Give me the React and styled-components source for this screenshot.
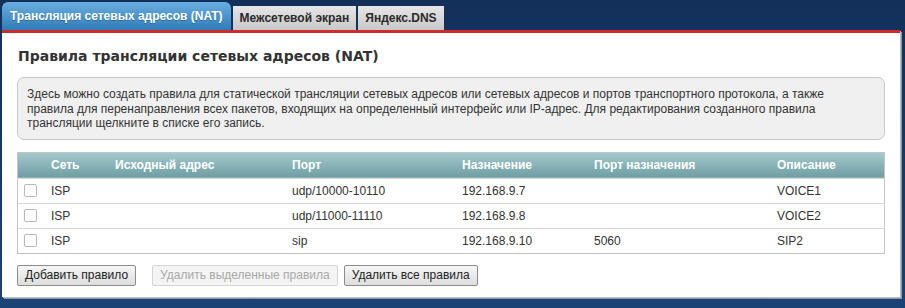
import React from 'react';
import styled, { createGlobalStyle } from 'styled-components';

const GlobalStyle = createGlobalStyle`
  html, body { margin: 0; padding: 0; }
  body {
    background: linear-gradient(#12305a, #1a4275);
    min-height: 308px;
    font-family: "Liberation Sans", Arial, sans-serif;
    font-size: 12px;
    color: #333;
  }
`;

const Page = styled.div`
  padding: 2px 5px 0 2px;
  width: 905px; box-sizing: border-box;
`;
const TabBar = styled.div`
  display: flex; align-items: flex-end; gap: 2px; height: 28px;
`;
const Tab = styled.div`
  height: ${p => p.active ? '28px' : '24px'};
  box-sizing: border-box;
  padding: 0 ${p => p.active ? '8px' : '7px'};
  display: flex; align-items: center;
  font-weight: bold; font-size: 12px;
  border-radius: ${p => p.active ? '6px 6px 0 0' : '0'};
  color: ${p => p.active ? '#fff' : '#2a2a2a'};
  background: ${p => p.active
    ? 'linear-gradient(#6aaee0, #2f7cb8)'
    : 'linear-gradient(#e6e6e6, #c9c9c9)'};
  text-shadow: ${p => p.active ? '0 1px 0 rgba(0,0,0,0.25)' : 'none'};
`;
const Panel = styled.div`
  background: #fff;
  border-top: 3px solid #cf2b2b;
  box-shadow: 1px 1px 0 #bbb, 2px 2px 0 #8a9bb0;
  padding: 14px 15px 16px 15px;
  height: 267px; box-sizing: border-box;
`;
const Title = styled.h1`
  margin: 0 0 12px 1px;
  font-family: "DejaVu Sans", Verdana, sans-serif;
  font-size: 14px; font-weight: bold; color: #333;
  line-height: 18px;
`;
const Info = styled.div`
  background: #f0f0f0;
  border: 1px solid #c8c8c8;
  border-radius: 7px;
  padding: 9px 45px 8px 9px;
  line-height: 14.5px;
  margin-bottom: 12px;
`;
const Table = styled.table`
  width: 100%;
  border-collapse: collapse;
  border: 1px solid #c4c4c4;
`;
const HeadCell = styled.th`
  height: 25px; padding: 0; text-align: left;
  font-weight: bold; color: #fff;
  background: linear-gradient(#a4cace, #6e9da2);
  width: ${p => p.w || 'auto'};
`;
const Row = styled.tr`
  border-top: 1px solid #d6d6d6;
`;
const Cell = styled.td`
  height: 24px; padding: 0; color: #333;
`;
const Box = styled.span`
  display: block; width: 11px; height: 11px; margin-left: 6px;
  border: 1px solid #b8b8b8; border-radius: 2px; background: #fff;
`;
const Buttons = styled.div`
  display: flex; gap: 6px; margin-top: 11px;
`;
const Button = styled.button`
  font-family: "Liberation Sans", Arial, sans-serif;
  font-size: 12px; height: 21px; padding: 0 7px;
  border: 1px solid ${p => p.disabled ? '#d4d4d4' : '#8c8c8c'};
  border-radius: 2px;
  color: ${p => p.disabled ? '#a8a8a8' : '#222'};
  background: ${p => p.disabled ? '#f4f4f4' : 'linear-gradient(#f6f6f6, #dedede)'};
  margin-right: ${p => p.gap || 0};
`;

const rows = [
  ['ISP', '', 'udp/10000-10110', '192.168.9.7', '', 'VOICE1'],
  ['ISP', '', 'udp/11000-11110', '192.168.9.8', '', 'VOICE2'],
  ['ISP', '', 'sip', '192.168.9.10', '5060', 'SIP2'],
];
const widths = ['33px', '64px', '177px', '170px', '132px', '183px', 'auto'];

export default function App() {
  return (
    <Page>
      <GlobalStyle />
      <TabBar>
        <Tab active>Трансляция сетевых адресов (NAT)</Tab>
        <Tab>Межсетевой экран</Tab>
        <Tab>Яндекс.DNS</Tab>
      </TabBar>
      <Panel>
        <Title>Правила трансляции сетевых адресов (NAT)</Title>
        <Info>
          Здесь можно создать правила для статической трансляции сетевых адресов или сетевых адресов и портов транспортного протокола, а также
          правила для перенаправления всех пакетов, входящих на определенный интерфейс или IP-адрес. Для редактирования созданного правила
          трансляции щелкните в списке его запись.
        </Info>
        <Table>
          <thead>
            <tr>
              <HeadCell w={widths[0]} />
              <HeadCell w={widths[1]}>Сеть</HeadCell>
              <HeadCell w={widths[2]}>Исходный адрес</HeadCell>
              <HeadCell w={widths[3]}>Порт</HeadCell>
              <HeadCell w={widths[4]}>Назначение</HeadCell>
              <HeadCell w={widths[5]}>Порт назначения</HeadCell>
              <HeadCell>Описание</HeadCell>
            </tr>
          </thead>
          <tbody>
            {rows.map((r, i) => (
              <Row key={i}>
                <Cell><Box /></Cell>
                {r.map((c, j) => <Cell key={j}>{c}</Cell>)}
              </Row>
            ))}
          </tbody>
        </Table>
        <Buttons>
          <Button gap="10px">Добавить правило</Button>
          <Button disabled>Удалить выделенные правила</Button>
          <Button>Удалить все правила</Button>
        </Buttons>
      </Panel>
    </Page>
  );
}
